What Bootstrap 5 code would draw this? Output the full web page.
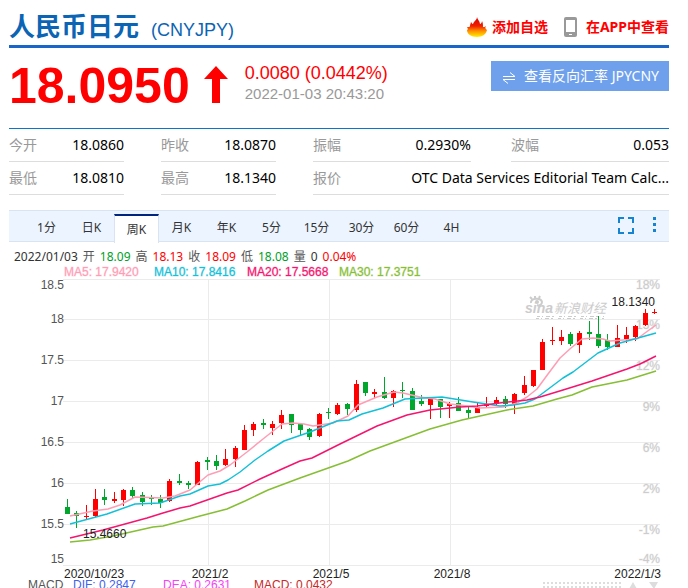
<!DOCTYPE html>
<html lang="zh-CN">
<head>
<meta charset="utf-8">
<meta name="viewport" content="width=device-width, initial-scale=1">
<title>人民币日元 (CNYJPY)</title>
<link href="https://cdn.jsdelivr.net/npm/bootstrap@5.3.0/dist/css/bootstrap.min.css" rel="stylesheet">
<style>
  body { font-family: "Noto Sans", "Noto Sans CJK SC", sans-serif; font-size: 14px; line-height: 20px; color: #000; background: #fff; }
  .quote-page { padding: 0 19px 0 9px; overflow: hidden; }
  .arial { font-family: "Liberation Sans", Arial, sans-serif; }
  .quote-head { height: 48px; padding-top: 10px; border-bottom: 3px solid #1a66c8; }
  .quote-title { font-size: 26px; line-height: 32px; font-weight: 700; color: #0b64b4; }
  .quote-code { font-size: 18px; color: #0b64b4; margin-left: 12px; font-weight: 400; }
  .head-links { padding-top: 7px; }
  .head-link { color: #f00; font-weight: 700; text-decoration: none; }
  .price-row { height: 80px; padding-top: 12px; }
  .price-now { font-size: 50px; line-height: 52px; color: #f00; font-weight: 700; }
  .price-arrow { margin: 6px 17px 0 14px; }
  .price-change { font-size: 18px; line-height: 22px; color: #f00; margin-top: 2px; }
  .price-time { font-size: 15px; line-height: 20px; color: #999; }
  .reverse-btn { height: 30px; background: #6ea0ec; color: #fff; border: 0; padding: 0 10px 0 11px; font-size: 14px; margin-top: 1px; }
  .facts { display: grid; grid-template-columns: 115fr 115fr 161fr 158fr; column-gap: 37px; border-top: 1px solid #0b76c8; }
  .fact { height: 33px; border-bottom: 1px solid #ddd; min-width: 0; }
  .fact dt { color: #999; font-weight: 400; flex: none; }
  .fact-short { margin-right: 3px; }
  .fact-wide { grid-column: 3 / 5; }
  .k-bar { height: 32px; margin-top: 15px; padding-left: 15px; background: #ecf5ff; border: solid #d8e4f2; border-width: 1px 0; }
  .k-tab { width: 45px; height: 32px; border: 0; padding: 2px 0 0; background: none; font-size: 12px; line-height: 20px; color: #333; }
  .k-tab.active { height: 29px; margin-top: 3px; padding: 0; background: #fff; border: solid #d8e4f2; border-width: 2px 1px 0; border-top-color: #00267f; }
  .k-tools { gap: 14px; padding: 6px 8px 0 0; }
  .k-tool { border: 0; background: none; padding: 0; line-height: 0; }
  .k-info { height: 24px; gap: 5px; padding: 5px 0 0 5px; font-size: 12px; line-height: 20px; color: #333; white-space: nowrap; }
  .up { color: #f00; } .down { color: #00a028; } .lab { color: #555; }
  .k-chart { font-size: 12px; }
  .grid-line { stroke: #ebebeb; fill: none; }
  .pct, .legend-text { stroke-width: 1px; stroke-opacity: .3; }
  .pct { fill: #ccc; stroke: #ccc; }
  .ma { fill: none; stroke-width: 1.5; stroke-linejoin: round; }
</style>
<script src="https://cdn.jsdelivr.net/npm/bootstrap@5.3.0/dist/js/bootstrap.bundle.min.js"></script>
</head>
<body>
<main class="quote-page">
  <header class="quote-head d-flex justify-content-between align-items-start">
    <h1 class="quote-title mb-0">人民币日元<span class="quote-code arial">(CNYJPY)</span></h1>
    <div class="head-links d-flex align-items-center">
      <a class="head-link d-flex align-items-center" href="#">
        <svg width="22" height="20" viewBox="0 0 22 20" class="me-1" aria-hidden="true">
          <defs><linearGradient id="flame" x1="0" y1="0" x2="0" y2="1"><stop offset="0" stop-color="#d80000"/><stop offset=".45" stop-color="#f02000"/><stop offset=".7" stop-color="#ff9000"/><stop offset="1" stop-color="#fff000"/></linearGradient></defs>
          <path fill="url(#flame)" d="M11 0c0 2 3 4 3 7 1 0 2-2 2-3 1 2 1 4 1 6 1 0 2 0 3-1-1 1-1 3 1 4-1 4-4 7-10 7S1 17 1 13c1 0 1-2 0-3 2 0 3 0 3-1 0-2 1-3 1-4 1 1 1 2 2 2 1-3 4-4 4-7z"/>
        </svg>添加自选</a>
      <a class="head-link d-flex align-items-center ms-3" href="#">
        <svg width="14" height="20" viewBox="0 0 14 20" aria-hidden="true"><rect width="13" height="20" rx="2" fill="#999"/><path fill="#fff" d="M2 3h9v12H2zM5 17h3v1H5z"/></svg><span class="ms-1 ps-1">在APP中查看</span></a>
    </div>
  </header>

  <section class="price-row d-flex align-items-start">
    <div class="price-now arial">18.0950</div>
    <svg class="price-arrow" width="24" height="37" viewBox="0 0 24 37" aria-label="上涨"><path fill="#f00" d="M12 0 24 13H16V37H8V13H0z"/></svg>
    <div class="arial">
      <div class="price-change">0.0080 (0.0442%)</div>
      <div class="price-time">2022-01-03 20:43:20</div>
    </div>
    <button type="button" class="reverse-btn ms-auto d-flex align-items-center">
      <svg width="14" height="12" viewBox="0 0 14 12" class="me-2 mt-1" fill="none" stroke="#fff" aria-hidden="true"><path d="M1 4.500H13L8 .5M13 7.500H1L6 11.500"/></svg>查看反向汇率 JPYCNY</button>
  </section>

  <dl class="facts mb-0">
    <div class="fact d-flex align-items-center justify-content-between"><dt>今开</dt><dd class="mb-0">18.0860</dd></div>
    <div class="fact d-flex align-items-center justify-content-between"><dt>昨收</dt><dd class="mb-0">18.0870</dd></div>
    <div class="fact fact-short d-flex align-items-center justify-content-between"><dt>振幅</dt><dd class="mb-0">0.2930%</dd></div>
    <div class="fact d-flex align-items-center justify-content-between"><dt>波幅</dt><dd class="mb-0">0.053</dd></div>
    <div class="fact d-flex align-items-center justify-content-between"><dt>最低</dt><dd class="mb-0">18.0810</dd></div>
    <div class="fact d-flex align-items-center justify-content-between"><dt>最高</dt><dd class="mb-0">18.1340</dd></div>
    <div class="fact fact-wide d-flex align-items-center justify-content-between"><dt>报价</dt><dd class="mb-0 text-truncate">OTC Data Services Editorial Team Calc...</dd></div>
  </dl>

  <nav class="k-bar d-flex align-items-start">
    <button type="button" class="k-tab">1分</button>
    <button type="button" class="k-tab">日K</button>
    <button type="button" class="k-tab active" aria-current="true">周K</button>
    <button type="button" class="k-tab">月K</button>
    <button type="button" class="k-tab">年K</button>
    <button type="button" class="k-tab">5分</button>
    <button type="button" class="k-tab">15分</button>
    <button type="button" class="k-tab">30分</button>
    <button type="button" class="k-tab">60分</button>
    <button type="button" class="k-tab">4H</button>
    <div class="k-tools ms-auto d-flex align-items-start">
      <button type="button" class="k-tool" aria-label="全屏"><svg width="18" height="17" viewBox="0 0 18 17" fill="none" stroke="#1583d2" stroke-width="2"><path d="M2 6V1H7M11 1H16V6M16 11V16H11M7 16H2V11"/></svg></button>
      <button type="button" class="k-tool px-1" aria-label="更多"><svg width="4" height="16" viewBox="0 0 4 16" fill="#1583d2"><path d="M0 0h3v3H0zM0 6h3v3H0zM0 12h3v3H0z"/></svg></button>
    </div>
  </nav>

  <div class="k-info d-flex"><span>2022/01/03</span><span class="lab">开</span><span class="down">18.09</span><span class="lab">高</span><span class="up">18.13</span><span class="lab">收</span><span class="up">18.09</span><span class="lab">低</span><span class="down">18.08</span><span class="lab">量</span><span>0</span><span class="up">0.04%</span></div>

  <svg class="k-chart arial d-block w-100" viewBox="9 266 660 322" role="img" aria-label="周K线图">
    <path class="grid-line" d="M63 279.500H660M63 319.500H660M63 360.500H660M63 401.500H660M63 442.500H660M63 483.500H660M63 524.500H660M63 565.500H660M208.500 279V565M329.500 279V565M450.500 279V565"/>
    <g class="legend-text">
      <text x="64" y="276" fill="#ff9db5" stroke="#ff9db5">MA5: 17.9420</text>
      <text x="154" y="276" fill="#14c0d8" stroke="#14c0d8">MA10: 17.8416</text>
      <text x="247" y="276" fill="#f5146e" stroke="#f5146e">MA20: 17.5668</text>
      <text x="339" y="276" fill="#86be34" stroke="#86be34">MA30: 17.3751</text>
    </g>
    <g fill="#555" text-anchor="end">
      <text x="64" y="289">18.5</text><text x="64" y="323">18</text><text x="64" y="364">17.5</text><text x="64" y="405">17</text><text x="64" y="446">16.5</text><text x="64" y="487">16</text><text x="64" y="528">15.5</text><text x="64" y="563">15</text>
    </g>
    <g class="pct" text-anchor="end">
      <text x="660" y="289">18%</text><text x="660" y="329">15%</text><text x="660" y="370">12%</text><text x="660" y="411">9%</text><text x="660" y="452">6%</text><text x="660" y="493">2%</text><text x="660" y="534">-1%</text><text x="660" y="563">-4%</text>
    </g>
    <g fill="#ccc">
      <text x="525" y="313" font-size="14" font-weight="700" font-style="italic">sina</text>
      <text x="554" y="313" font-size="13" font-style="italic" font-family="Noto Sans CJK SC, sans-serif">新浪财经</text>
      <path fill="none" stroke="#ccc" stroke-width="2" d="M531 303c-1-5 10-6 11-1 0 3-3 4-5 3M532 299l-2-2M535 298v-2M539 298l1-2"/>
      <circle cx="537" cy="302" r="2"/>
      <path fill="none" stroke="#ccc" stroke-width="1" stroke-dasharray="3 2 1 3 4 2 2 5" d="M537 316.500H604M536 318.500H604"/>
    </g>
    <g id="candles"></g>
    <polyline class="ma" stroke="#ff9db5" points="70,516 93,511 108,509 120,505 135,497 163,498 175,496 190,490 208,475 220,471 230,465 247,452 263,439 282,424 293,423 304,424 313,426 333,423 348,416 358,405 377,397 394,392 403,393 420,397 435,399 450,404 460,405 480,408 503,407 517,403 527,397 537,389 548,374 560,358 571,348 582,339 593,338 603,339 610,341 623,340 637,339 645,333 656,325"/>
    <polyline class="ma" stroke="#14c0d8" points="70,524 107,514 135,504 160,503 180,496 190,494 208,486 220,484 228,480 240,472 255,460 268,451 284,441 310,432 337,421 349,420 362,414 383,408 405,399 442,397 473,402 500,406 513,405 525,403 535,399 563,378 573,372 598,353 620,343 656,333"/>
    <polyline class="ma" stroke="#f5146e" points="70,538 103,530 147,518 163,513 180,508 190,506 227,493 238,490 260,479 282,469 300,461 312,458 340,444 377,426 407,415 430,410 460,407 477,406 507,402 527,400 540,397 563,390 592,381 627,369 640,364 656,356"/>
    <polyline class="ma" stroke="#86be34" points="70,542 90,540 113,536 153,527 163,526 200,516 227,509 245,501 268,490 300,478 348,461 370,451 400,440 430,429 462,420 507,410 533,406 557,399 572,395 592,387 627,380 656,371"/>
    <g fill="#222">
      <text x="83" y="538">15.4660</text><text x="655" y="306" text-anchor="end">18.1340</text>
      <text x="64" y="578">2020/10/23</text><text x="210" y="578" text-anchor="middle">2021/2</text><text x="331" y="578" text-anchor="middle">2021/5</text><text x="452" y="578" text-anchor="middle">2021/8</text><text x="661" y="578" text-anchor="end">2022/1/3</text>
    </g>
    <text x="28" y="589" fill="#555">MACD</text>
    <text x="73" y="589" fill="#4060f0">DIF: 0.2847</text>
    <text x="163" y="589" fill="#f840f8">DEA: 0.2631</text>
    <text x="254" y="589" fill="#c82828">MACD: 0.0432</text>
    <path stroke="#ddd" stroke-width="2" stroke-dasharray="2 2" d="M543 583H621M543 587H621"/>
    <path fill="#ddd" d="M633 582l4 7h-8zM649 582h9l-4 7z"/>
  </svg>
</main>
<script>
  // Weekly candles: direction (r up, g down), high, body top, body bottom, low in chart units
  const candles = `g499,507,514,514 g511,513,516,528 r505,516,517,519 r489,499,516,517 g489,497,500,505 r492,499,501,503 r489,490,500,506 g487,490,496,498
    g492,495,502,506 g495,498,499,505 g495,499,503,508 r479,481,501,502 g474,481,483,485 g481,483,485,489 r461,462,485,485 g457,460,462,470
    g455,461,466,470 r449,459,465,466 r446,448,459,467 r425,430,450,450 r422,424,430,436 g419,423,425,429 r421,424,428,435 r410,415,423,429
    g414,414,425,433 g424,424,430,436 g428,429,437,440 r413,414,436,437 g408,412,413,419 r403,405,414,415 g403,404,409,415 r380,384,410,412
    g382,382,393,396 r389,392,394,398 g377,392,398,399 r390,391,398,407 g382,390,391,398 g388,391,410,410 g395,401,404,406 r397,399,405,419
    g399,399,407,418 r402,404,406,418 g397,403,411,411 g407,410,413,418 r402,407,413,413 r397,404,406,407 r397,400,404,405 g396,399,404,408
    r393,394,404,414 r376,385,393,395 r370,370,386,387 r339,342,370,370 r327,340,341,345 r330,337,341,345 g332,334,344,346 r331,333,345,353
    g321,332,334,340 g316,334,346,348 g334,340,347,350 r325,338,347,347 r327,335,339,343 r325,326,337,341 r309,313,325,326 r309,312,313,314`.split(/\s+/);
  document.getElementById('candles').innerHTML = candles.map((c, i) => {
    const [h, t, b, l] = c.slice(1).split(',').map(Number);
    const x = Math.floor(67.5 + i * 587 / 63);
    return `<path fill="${c[0] === 'r' ? '#f00' : '#00a72c'}" d="M${x} ${h}h1V${l}h-1zM${x - 2} ${t}h5V${b}h-5z"/>`;
  }).join('');
</script>
</body>
</html>
